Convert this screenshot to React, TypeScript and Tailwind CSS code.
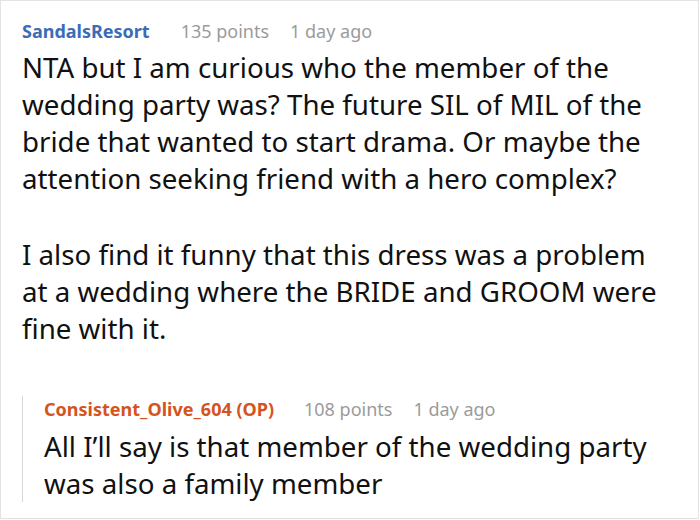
const Line = ({ children }: { children: React.ReactNode }) => <span className="block whitespace-nowrap">{children}</span>;

export default function App() {
  return (
    <div className="h-[520px] w-[700px] overflow-hidden bg-white font-['Noto_Sans',sans-serif]">
      <div className="h-[519px] w-[699px] border border-[#e3e3e3] pl-[21px] pt-[17px]">
        <div className="flex items-center text-[18px] leading-[26px]">
          <span className="font-bold text-[#3a6cb8]">SandalsResort</span>
          <span className="ml-[31px] text-[#9b9b9b]">135 points</span>
          <span className="ml-[21px] text-[#9b9b9b]">1 day ago</span>
        </div>
        <div className="mt-[5px] text-[27.7px] leading-[37px] text-[#111]">
          <p>
            <Line>NTA but I am curious who the member of the</Line>
            <Line>wedding party was? The future SIL of MIL of the</Line>
            <Line>bride that wanted to start drama. Or maybe the</Line>
            <Line>attention seeking friend with a hero complex?</Line>
          </p>
          <p className="mt-[39px]">
            <Line>I also find it funny that this dress was a problem</Line>
            <Line>at a wedding where the BRIDE and GROOM were</Line>
            <Line>fine with it.</Line>
          </p>
        </div>
        <div className="mt-[61px] border-l border-[#d8d8d8] pl-[21px]">
          <div className="-mt-[12px] flex items-center text-[18px] leading-[26px]">
            <span className="font-bold text-[#d4541d]">Consistent_Olive_604 (OP)</span>
            <span className="ml-[30px] text-[#9b9b9b]">108 points</span>
            <span className="ml-[21px] text-[#9b9b9b]">1 day ago</span>
          </div>
          <p className="mt-[6px] text-[27.7px] leading-[37px] text-[#111]">
            <Line>All I’ll say is that member of the wedding party</Line>
            <Line>was also a family member</Line>
          </p>
        </div>
      </div>
    </div>
  );
}
